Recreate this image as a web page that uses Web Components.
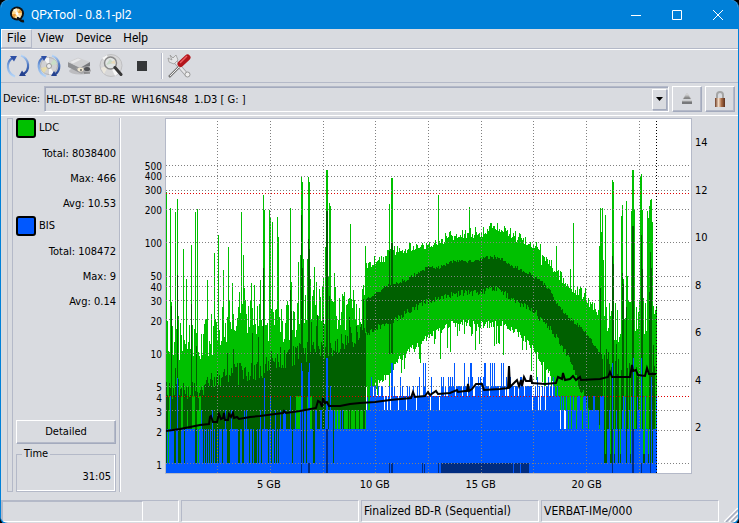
<!DOCTYPE html>
<html lang="en">
<head>
<meta charset="utf-8">
<title>QPxTool - 0.8.1-pl2</title>
<style>
html, body { margin: 0; background: #000; }
body { --face: #d9dbe0; --shade: #b4b9c8; --deep: #a3aabd; --accent: #0080d8; font: 12px/16px "DejaVu Sans Condensed", "DejaVu Sans", sans-serif; color: #000; }
</style>
</head>
<body>
<qpx-window></qpx-window>
<script>
function define(name, html, setup) {
  const template = document.createElement('template');
  template.innerHTML = html;
  customElements.define(name, class extends HTMLElement {
    constructor() {
      super();
      this.attachShadow({ mode: 'open' }).append(template.content.cloneNode(true));
    }
    connectedCallback() { if (setup) setup.call(this, this.shadowRoot); }
  });
}

define('qpx-title-bar', `
<style>
:host { display: flex; align-items: center; height: 29px; background: var(--accent); color: #fff; font: 12px/16px Roboto, "Open Sans", sans-serif; padding-left: 8px; }
h1 { font: inherit; margin: 0 0 0 5px; flex: 1; }
button { width: 41px; height: 28px; border: 0; padding: 0; background: none; color: #fff; display: grid; place-items: center; }
</style>
<svg width="17" height="17" viewBox="0 0 17 17"><circle cx="8" cy="7.500" r="7" fill="#111"/><circle cx="8" cy="7.500" r="5" fill="#ffd98c"/><path d="M8 7.500 4 4a5 5 0 0 1 4-1.500zM8 7.500l4 3.500a5 5 0 0 1-4 1.500z" fill="#fff4da"/><path d="M8 7.500 3 8.500a5 5 0 0 0 2 3.500zM8 7.500l5-1a5 5 0 0 0-2-3z" fill="#ed9b37"/><circle cx="8" cy="7.500" r="1.500" fill="#fff"/><path d="M8 12c3 0 3 4 7 3" fill="none" stroke="#111" stroke-width="2.500"/></svg>
<h1>QPxTool - 0.8.1-pl2</h1>
<button aria-label="Minimize"><svg width="10" height="10"><path d="M0 5.500h10" stroke="#fff"/></svg></button>
<button aria-label="Maximize"><svg width="10" height="10"><path d="M.5.5h9v9h-9z" fill="none" stroke="#fff"/></svg></button>
<button aria-label="Close"><svg width="10" height="10"><path d="M0 0l10 10M10 0L0 10" stroke="#fff"/></svg></button>`);

define('qpx-menu-bar', `
<style>
:host { display: flex; height: 19px; border-bottom: 1px solid var(--shade); box-shadow: 0 1px #fff; font: 12px/16px Roboto, "Open Sans", sans-serif; }
button { font: inherit; color: inherit; background: none; border: 1px solid transparent; padding: 0 5px; height: 19px; line-height: 17px; }
button.on { border-color: #fff var(--shade) var(--shade) #fff; }
</style>
<button class="on">File</button><button>View</button><button>Device</button><button>Help</button>`);

define('qpx-tool-bar', `
<style>
:host { display: flex; align-items: center; height: 32px; border-bottom: 1px solid var(--shade); padding: 1px 5px 0; gap: 7px; }
button { width: 24px; height: 24px; padding: 0; border: 0; background: none; }
svg { display: block; }
i { width: 1px; height: 26px; background: #fff; border-left: 1px solid var(--shade); margin: 0 -3px 0 0; }
</style>
<button aria-label="Rescan bus"><svg width="24" height="24" viewBox="0 0 24 24"><defs><linearGradient id="a" x2="0" y2="1"><stop stop-color="#3d62b5"/><stop offset=".4" stop-color="#7ba6e0"/><stop offset="1" stop-color="#b4d4f7"/></linearGradient><linearGradient id="b" x2="0" y2="1"><stop stop-color="#b4d4f7"/><stop offset=".5" stop-color="#5079c2"/><stop offset="1" stop-color="#23418f"/></linearGradient></defs><path d="M9 22.500C0 19 0 8 6.500 4" fill="none" stroke="url(#a)" stroke-width="2.200"/><path d="M4 2l7 0-3 5.500z" fill="#2d4fa5"/><path d="M15 1.500C24 5 24 16 17.500 20" fill="none" stroke="url(#b)" stroke-width="2.200"/><path d="M20 22l-7 0 3-5.500z" fill="#23418f"/></svg></button>
<button aria-label="Reload media"><svg width="24" height="24" viewBox="0 0 24 24"><defs><linearGradient id="a" x2="0" y2="1"><stop stop-color="#3d62b5"/><stop offset=".4" stop-color="#7ba6e0"/><stop offset="1" stop-color="#b4d4f7"/></linearGradient><linearGradient id="b" x2="0" y2="1"><stop stop-color="#b4d4f7"/><stop offset=".5" stop-color="#5079c2"/><stop offset="1" stop-color="#23418f"/></linearGradient></defs><circle cx="12" cy="12" r="8.500" fill="#d0d0d2" stroke="#b0b0b2"/><path d="M12 12 7 5a8 8 0 0 1 5-1.500zM12 12l5 7a8 8 0 0 1-5 1.500z" fill="#f4f4f4"/><path d="M12 12l8-2a8 8 0 0 0-3-5z" fill="#c9ddc6"/><path d="M12 12l-8 2a8 8 0 0 0 3 5z" fill="#e7dba9"/><circle cx="12" cy="12" r="2.500" fill="#eee" stroke="#999"/><path d="M9 22.500C0 19 0 8 5.500 4" fill="none" stroke="url(#a)" stroke-width="2.200"/><path d="M4 2l6 0-3 5z" fill="#2d4fa5"/><path d="M15 1.500C24 5 24 16 18.500 20" fill="none" stroke="url(#b)" stroke-width="2.200"/><path d="M20 22l-6 0 3-5z" fill="#23418f"/></svg></button>
<button aria-label="Device info"><svg width="24" height="24" viewBox="0 0 24 24"><ellipse cx="12" cy="17" rx="11" ry="3.500" fill="#bcbcbf"/><path d="M0 8v5l12 6V13z" fill="#8f9093"/><path d="M0 8 10 3.500 22 8l-10 6z" fill="#cfcfd1"/><path d="M2 8l8-3.500 3 1-8 4z" fill="#e8e8ea"/><path d="M12 14l10-6v4l-10 6z" fill="#77787b"/><path d="M8 14l13-2 2 5-10 3z" fill="#a8a8aa"/><ellipse cx="12.500" cy="15.500" rx="3" ry="2" fill="#eee5cf"/><ellipse cx="19" cy="15" rx="3" ry="2" fill="#505154"/><circle cx="13" cy="16" r="1" fill="#666"/><path d="M16 19h6" stroke="#666"/></svg></button>
<button aria-label="Start scan"><svg width="24" height="24" viewBox="0 0 24 24"><circle cx="12" cy="11.500" r="11" fill="#d7d7d8" stroke="#bfbfc1"/><path d="M11 11 3 4l5-3zM11 11l10 7-5 4z" fill="#f7f7f7"/><path d="M2 14l8-3-5 9z" fill="#ebe7dc"/><circle cx="11.500" cy="9" r="6" fill="#e2e5e4" stroke="#8a8a8a" stroke-width="1.500"/><path d="M7 11l4-6 4 4z" fill="#c8dac7"/><path d="M11.500 9l4-3 1 4z" fill="#ead9b8"/><path d="M16 13.500l6 7" stroke="#383838" stroke-width="3" stroke-linecap="round"/></svg></button>
<button aria-label="Stop"><svg width="24" height="24"><path d="M7 7h10v10H7z" fill="#353739"/></svg></button>
<i></i>
<button aria-label="Preferences"><svg width="24" height="24" viewBox="0 0 24 24"><path d="M5 4l15 17" stroke="#9b9c9f" stroke-width="4"/><path d="M5 4l15 17" stroke="#e6e6e8" stroke-width="2.500"/><path d="M3 1l3 3 3-3 2 5-4 4-5-2-1-4 4 2z" fill="#e4e5e7" stroke="#999" stroke-width=".8"/><circle cx="20.500" cy="20.500" r="2.500" fill="#eee" stroke="#999"/><path d="M12 13 2 23" stroke="#777" stroke-width="2.500"/><path d="M12 13 3 22" stroke="#eee"/><path d="M13.500 10l7-6.500" stroke="#b3151c" stroke-width="6" stroke-linecap="round"/><path d="M13 9l7-7" stroke="#ee5f62" stroke-width="1.500"/></svg></button>`);

define('qpx-device-row', `
<style>
:host { display: flex; align-items: center; padding: 3px 3px 3px 2px; gap: 3px; font-size: 11px; }
label { flex: none; margin-right: 1px; }
.combo { flex: 1; display: grid; min-width: 0; }
.combo > * { grid-area: 1 / 1; }
select { appearance: none; font: inherit; color: inherit; width: 100%; height: 26px; margin: 0; border: 1px solid; border-color: var(--shade) #fff #fff var(--shade); box-shadow: inset 1px 1px var(--deep); background: var(--face); padding: 1px 20px 0 1px; border-radius: 0; }
.arrow { justify-self: end; align-self: center; margin-right: 2px; width: 13px; height: 19px; border: 1px solid; border-color: #fff var(--deep) var(--deep) #fff; box-shadow: 1px 1px var(--shade); display: grid; place-items: center; pointer-events: none; }
button { width: 30px; height: 26px; padding: 0; background: var(--face); border: 1px solid; border-color: #fff var(--deep) var(--deep) #fff; box-shadow: inset -1px -1px var(--shade); display: grid; place-items: center; }
</style>
<label for="d">Device:</label>
<div class="combo"><select id="d"><option>HL-DT-ST BD-RE&nbsp; WH16NS48&nbsp; 1.D3 [ G: ]</option></select><span class="arrow"><svg width="7" height="4"><path d="M0 0h7L3.500 4z"/></svg></span></div>
<button aria-label="Eject"><svg width="12" height="14" viewBox="0 0 12 14"><defs><linearGradient id="g" x2="0" y2="1"><stop stop-color="#fff"/><stop offset="1" stop-color="#666"/></linearGradient></defs><path d="M6 1l4 6H2z" fill="url(#g)" stroke="#bbb" stroke-width=".5"/><path d="M1 9h10v3H1z" fill="#77787a"/><path d="M1 9h10" stroke="#bbb"/></svg></button>
<button aria-label="Lock"><svg width="12" height="17" viewBox="0 0 12 17"><defs><linearGradient id="l"><stop stop-color="#6e3b22"/><stop offset=".35" stop-color="#f0d8c2"/><stop offset=".65" stop-color="#a86b45"/><stop offset="1" stop-color="#5b2f1d"/></linearGradient></defs><path d="M3 8V4q0-3 3-3t3 3v4" fill="none" stroke="#a5a5a5" stroke-width="2"/><path d="M1 7h10v9H1z" fill="url(#l)"/></svg></button>`);

define('qpx-stat', `
<style>
:host { display: block; }
h2 { display: flex; align-items: center; gap: 3px; margin: 0; height: 20px; font: inherit; line-height: 18px; }
i { width: 16px; height: 16px; border: 2px solid #000; border-radius: 3px; background: var(--swatch); }
p { margin: 0; height: 25px; line-height: 25px; text-align: right; }
.rows { padding: 3px 0 0; }
</style>
<h2><i></i><slot name="name"></slot></h2>
<div class="rows"><p><slot name="total"></slot></p><p><slot name="max"></slot></p><p><slot name="avg"></slot></p></div>`);

define('qpx-side-panel', `
<style>
:host { display: flex; flex-direction: column; width: 100px; font-size: 11px; padding: 0 3px 0 2px; margin-left: 4px; border-right: 1px solid var(--shade); box-shadow: 1px 0 #fff; }
.body { display: flex; flex-direction: column; flex: 1; }
button { font: inherit; color: inherit; height: 24px; padding: 0; background: var(--face); border: 1px solid; border-color: #fff var(--deep) var(--deep) #fff; box-shadow: inset -1px -1px var(--shade); margin-top: auto; }
fieldset { margin: 3px 0 0; padding: 8px 4px 6px; border: 1px solid var(--shade); box-shadow: inset -1px -1px #fff; text-align: right; min-width: 0; }
legend { text-align: left; padding: 0 2px; margin-left: 1px; line-height: 14px; }
</style>
<div class="body">
<qpx-stat style="--swatch:#00c000"><span slot="name">LDC</span><span slot="total">Total: 8038400</span><span slot="max">Max: 466</span><span slot="avg">Avg: 10.53</span></qpx-stat>
<qpx-stat style="--swatch:#0058ff"><span slot="name">BIS</span><span slot="total">Total: 108472</span><span slot="max">Max: 9</span><span slot="avg">Avg: 0.14</span></qpx-stat>
<button>Detailed</button>
<fieldset><legend>Time</legend>31:05</fieldset>
</div>`);

/* Plot space: 525 x 354 units, log scale on the left axis, 21.1 units per GB. */
const LEVELS = [1, 2, 3, 4, 5, 10, 20, 30, 40, 50, 100, 200, 300, 400, 500];
const yOf = v => 344 - 110.3 * Math.log10(v);

function curve(points) {
  return x => {
    for (let i = 1; i < points.length; i++) {
      const [x0, y0] = points[i - 1], [x1, y1] = points[i];
      if (x <= x1) return y0 + (y1 - y0) * Math.max(0, x - x0) / (x1 - x0);
    }
    return points[points.length - 1][1];
  };
}

function buildLayers() {
  let seed = 4711;
  const rnd = () => (seed = (seed * 1103515245 + 12345) % 2147483648) / 2147483648;
  const maxTop = curve([[0,216],[15,226],[35,229],[50,219],[75,198],[90,208],[110,208],[130,206],[150,190],[170,196],[185,198],[199,186],[200,146],[215,142],[225,134],[245,129],[265,125],[285,118],[305,115],[318,114],[324,109],[340,112],[350,119],[362,124],[374,131],[384,145],[394,158],[404,170],[414,175],[424,185],[430,196],[440,208],[455,212],[470,198],[490,208]]);
  const darkTop = curve([[0,277],[35,277],[50,267],[80,260],[110,252],[135,240],[160,238],[185,228],[199,215],[200,180],[219,168],[239,161],[260,149],[274,148],[286,143],[314,141],[317,138],[331,138],[339,143],[362,154],[374,162],[384,172],[394,190],[404,200],[414,208],[424,220],[434,234],[439,245],[455,255],[490,255]]);
  const darkBot = curve([[200,214],[219,204],[234,197],[246,189],[259,183],[274,179],[286,175],[299,173],[314,174],[324,169],[334,171],[349,182],[359,186],[369,192],[374,200],[384,210],[394,223],[404,243],[414,269],[419,277],[424,300],[434,310]]);
  const maxBot = curve([[200,266],[210,262],[219,255],[229,241],[239,232],[249,223],[259,215],[274,207],[284,202],[299,200],[324,202],[339,201],[349,208],[359,218],[369,229],[379,244],[386,258],[390,277]]);
  const green = {}, dark = {}, blue = {}, navy = {};

  for (let x = 0; x < 491; x++) {
    const hump = x >= 200 && x < 437;
    const r = rnd(), s = rnd();
    const jitter = hump ? (x > 410 ? 16 : 8) : 44;
    let top = maxTop(x) + (hump ? 4 : 16) - jitter * r * (hump && r > .85 ? 1.3 : 1);
    if (!hump && s > .92) top -= 22 * rnd();
    let bottom = 344;
    if (hump) {
      bottom = maxBot(x) + 8 * rnd();
      if (rnd() > .78) bottom += 28 * rnd();
      if (x > 388) bottom = x < 402 ? 291 : 310;
    }
    green[x] = [top, bottom];
    let dTop = darkTop(x) + (hump ? 2 - 4 * rnd() : 4 - 22 * rnd());
    let dBot = hump ? darkBot(x) + 4 - 7 * rnd() : 344;
    if (!hump && rnd() > .87) dTop -= 38 * rnd();
    if (x < 36 && rnd() > .65) dBot = rnd() > .5 ? 277 : 291;
    if (x > 126 && x < 146 && rnd() > .4) dBot = 277;
    if (x > 168 && x < 200) dBot = rnd() > .4 ? 291 : 310;
    if (x >= 437 && rnd() > .6) dTop = 335;
    if (dBot > dTop) dark[x] = [Math.max(dTop, top), dBot];

    const q = rnd();
    let b;
    if (x < 115) b = q > .94 ? 291 : q > .45 ? 310 : 344;
    else if (x < 175) b = q > .66 ? 291 : q > .1 ? 310 : 344;
    else if (x < 200) b = q > .9 ? 291 : 310;
    else if (x < 275) b = q > .92 ? 258 : q > .75 ? 267 : q > .14 ? 277 : 291;
    else if (x < 365) b = q > .9 ? 244 : q > .72 ? 258 : q > .18 ? 267 : 277;
    else if (x < 392) b = q > .85 ? 258 : q > .6 ? 267 : q > .12 ? 277 : 291;
    else if (x < 437) b = q > .6 ? 277 : q > .2 ? 291 : 310;
    else b = q > .88 ? 277 : q > .74 ? 291 : q > .3 ? 310 : 344;
    blue[x] = [b, 354];
  }

  const spikes = [[0,73],[4,89],[9,93],[11,80],[17,130],[20,160],[25,126],[29,93],[31,90],[41,161],[48,134],[52,116],[57,151],[62,128],[66,164],[75,93],[77,136],[94,161],[97,76],[98,91],[103,91],[104,98],[106,103],[111,98],[112,118],[124,89],[125,163],[132,143],[134,136],[135,57],[136,63],[137,140],[141,140],[142,58],[143,63],[144,160],[148,148],[159,128],[160,51],[161,51],[163,84],[164,87],[168,154],[184,105],[199,127],[223,85],[225,59],[226,59],[272,76],[303,88],[375,146],[390,127],[404,150],[407,104],[419,169],[433,127],[434,89],[435,113],[436,89],[437,141],[439,96],[446,61],[447,63],[455,97],[456,86],[457,160],[460,82],[461,157],[465,92],[466,51],[467,51],[468,91],[474,57],[475,55],[476,91],[481,92],[482,99],[483,87],[484,81],[485,80],[486,103],[479,184]];
  for (const [x, y] of spikes) green[x] = [y, Math.max(green[x][1], x > 436 ? 344 : green[x][1])];
  for (const [x, y] of [[11,156],[97,149],[124,171],[135,96],[136,149],[142,120],[143,130],[160,92],[161,92],[163,177],[223,132],[225,124],[226,124],[434,169],[446,137],[447,145],[456,154],[457,165],[460,188],[466,107],[467,107],[475,116],[476,150],[483,173],[484,133],[485,149],[5,187],[25,185],[184,208]])
    dark[x] = [y, x > 200 && x < 300 ? 235 : 344];
  for (const x of [223, 225, 226]) green[x][1] = 285;
  for (const [x, y] of [[4,277],[11,259],[98,259],[104,277],[124,277],[135,244],[136,252],[142,253],[143,244],[160,239],[161,239],[164,267],[223,267],[225,244],[226,244],[257,244],[259,244],[304,244],[324,244],[328,244],[335,244],[446,244],[467,239],[475,239],[485,258]]) blue[x] = [y, 354];
  for (const [x, y] of [[135,292],[142,344],[143,344],[160,310],[161,310],[223,344],[225,344],[226,344],[256,344],[258,344],[272,344],[446,310],[466,310],[467,310],[475,344],[484,344]]) navy[x] = [y, 354];
  for (let x = 275; x < 363; x++) if (x !== 347 && x !== 354) navy[x] = [344, 354];

  const path = cols => Object.keys(cols).map(x => `M${x} ${Math.round(cols[x][0])}h1V${Math.round(cols[x][1])}h-1z`).join('');
  return [['#00c000', green], ['#006000', dark], ['#0058ff', blue], ['#002c80', navy]]
    .map(([fill, cols]) => `<path fill="${fill}" d="${path(cols)}"/>`).join('');
}

const SPEED = '0,312 14,310 24,308 34,306 43,305 44,298 45,297 47,303 51,303 53,295 55,300 57,299 58,294 59,301 62,301 63,295 65,298 67,294 68,299 71,298 73,300 84,298 94,297 109,295 117,294 118,292 120,294 134,292 150,289 152,282 154,283 156,288 157,279 159,284 161,283 163,287 174,287 184,285 194,284 209,283 224,281 245,279 247,273 249,278 259,277 262,273 264,276 270,272 272,275 284,274 291,271 292,273 299,272 301,272 302,265 303,272 306,270 310,265 316,265 318,271 334,270 342,269 343,247 344,268 347,265 349,263 351,261 353,267 355,261 356,267 358,258 360,262 364,262 365,256 366,264 379,265 390,264 392,258 396,260 397,254 399,261 404,260 407,257 410,261 414,258 415,261 434,260 442,258 444,253 446,258 464,258 466,246 467,252 470,251 472,256 479,257 481,249 483,255 490,255';

define('qpx-chart', `
<style>
:host { display: grid; flex: 1; grid-template: 1fr 18px / 40px 1fr 43px; min-width: 0; margin-left: 5px; font-size: 11px; }
.plot { background: #fff; border: 1px solid var(--shade); min-height: 200px; display: grid; }
svg { display: block; width: 100%; height: 100%; min-height: 0; }
.y, .x { position: relative; }
.y span { position: absolute; transform: translateY(-50%); line-height: 10px; }
.left { font-size: 10px; }
.left span { right: 3px; } .right span { left: 3px; }
.x { grid-column: 2; }
.x span { position: absolute; top: 4px; transform: translateX(-50%); line-height: 14px; white-space: nowrap; }
</style>
<div class="y left"></div>
<div class="plot"><svg viewBox="0 0 525 354" preserveAspectRatio="none" role="img" aria-label="LDC and BIS error rates"></svg></div>
<div class="y right"></div>
<div class="x"></div>`, function (root) {
  let grid = '';
  for (const v of LEVELS) if (v !== 4) grid += `M0 ${Math.round(yOf(v)) + .5}H525`;
  grid += `M0 ${Math.round(yOf(400)) + .5}H525`;
  for (const x of [51, 104, 157, 209, 262, 315, 367, 420, 473]) grid += `M${x}.5 2V354`;
  root.querySelector('svg').innerHTML = `<g shape-rendering="crispEdges">${buildLayers()}</g>
    <g fill="none" stroke-dasharray="1 2" shape-rendering="crispEdges"><path stroke="#808080" d="${grid}"/><path stroke="#e00000" d="M0 74.5H525M0 277.5H525"/><path stroke="#000" d="M490.5 2V354"/></g>
    <polyline fill="none" stroke="#000" stroke-width="2" points="${SPEED}"/>`;
  const pct = y => (y / 354 * 100).toFixed(2) + '%';
  root.querySelector('.left').innerHTML = LEVELS.map(v => `<span style="top:${pct(yOf(v) + 2)}">${v}</span>`).join('');
  root.querySelector('.right').innerHTML = [2, 4, 6, 8, 10, 12, 14].map(v => `<span style="top:${pct(356 - 47.3 * v / 2)}">${v}</span>`).join('');
  root.querySelector('.x').innerHTML = [5, 10, 15, 20].map(v => `<span style="left:${((v * 21.1 - 2) / 525 * 100).toFixed(2)}%">${v} GB</span>`).join('');
});

define('qpx-status-bar', `
<style>
:host { display: grid; grid-template-columns: repeat(4, 1fr) 17px; column-gap: 2px; height: 22px; line-height: 20px; }
div { box-sizing: border-box; border: 1px solid; border-color: var(--shade) #fff #fff var(--shade); padding-left: 2px; white-space: nowrap; overflow: hidden; }
.job { padding: 0; }
.job p { box-sizing: border-box; margin: 0; width: 80%; height: 100%; border: 1px solid; border-color: var(--shade) #fff transparent var(--shade); }
svg { align-self: end; justify-self: end; }
</style>
<div class="job"><p role="progressbar" aria-label="Progress"></p></div><div></div><div>Finalized BD-R (Sequential)</div><div>VERBAT-IMe/000</div>
<svg width="14" height="14"><path d="M0 14 14 0M5 14l9-9M10 14l4-4" stroke="#fff" stroke-width="1.500"/><path d="M2 14 14 2M7 14l7-7M12 14l2-2" stroke="#a3aabd" stroke-width="1.500"/></svg>`);

define('qpx-window', `
<style>
:host { display: flex; flex-direction: column; box-sizing: border-box; min-height: 100vh; background: var(--face); border: solid var(--accent); border-width: 0 1px 2px; border-radius: 8px; overflow: hidden; }
main { flex: 1; display: flex; padding: 2px 3px 8px 6px; border-top: 1px solid #fff; }
.grip { box-sizing: border-box; width: 6px; border: 1px solid var(--shade); flex: none; margin-right: -3px; }
qpx-status-bar { margin-bottom: 1px; }
</style>
<qpx-title-bar></qpx-title-bar>
<qpx-menu-bar></qpx-menu-bar>
<qpx-tool-bar></qpx-tool-bar>
<qpx-device-row></qpx-device-row>
<main><div class="grip"></div><qpx-side-panel></qpx-side-panel><qpx-chart></qpx-chart></main>
<qpx-status-bar></qpx-status-bar>`);
</script>
</body>
</html>
